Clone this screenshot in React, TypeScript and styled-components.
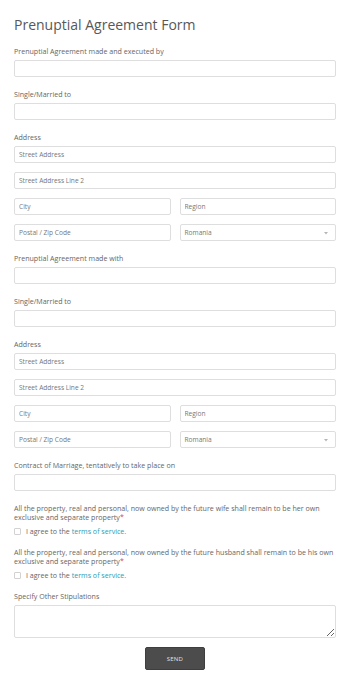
import React from "react";
import styled, { createGlobalStyle } from "styled-components";

const Global = createGlobalStyle`
  html, body { margin: 0; padding: 0; background: #fff; }
  body { font-family: "Open Sans", "Liberation Sans", sans-serif; color: #555; }
  * { box-sizing: border-box; }
`;

const Page = styled.form`
  display: flex;
  flex-direction: column;
  padding: 16px 14px 14px 14px;
  width: 350px;
`;

const Title = styled.h1`
  margin: 0 0 14px 0;
  font-size: 14px;
  line-height: 17px;
  font-weight: 400;
  color: #585858;
`;

const Field = styled.div<{ $gap?: number }>`
  display: flex;
  flex-direction: column;
  margin-bottom: ${(p) => (p.$gap ?? 13)}px;
`;

const Label = styled.label`
  font-size: 7.1px;
  line-height: 9px;
  color: #666;
  margin-bottom: 4px;
`;

const Req = styled.span`
  color: #e0403a;
`;

const Input = styled.input`
  height: 17px;
  width: 100%;
  border: 1px solid #dedede;
  border-radius: 2px;
  padding: 0 4px;
  font-family: inherit;
  font-size: 6.6px;
  color: #777;
  background: #fff;
  outline: none;
  &::placeholder { color: #777; }
`;

const Stack = styled.div`
  display: flex;
  flex-direction: column;
  gap: 9px;
`;

const Row = styled.div`
  display: grid;
  grid-template-columns: 1fr 1fr;
  gap: 9px;
`;

const SelectBox = styled.div`
  position: relative;
  height: 17px;
  border: 1px solid #dedede;
  border-radius: 2px;
  padding: 0 4px;
  display: flex;
  align-items: center;
  font-size: 6.6px;
  color: #777;
`;

const Arrow = styled.svg`
  position: absolute;
  right: 7px;
  top: 7px;
`;

const CheckRow = styled.div`
  display: flex;
  align-items: center;
  gap: 5px;
  height: 10px;
  font-size: 7.1px;
  color: #666;
`;

const Box = styled.span`
  width: 7px;
  height: 7px;
  border: 1px solid #d2d2d2;
  border-radius: 1px;
  background: #fff;
`;

const Link = styled.a`
  color: #2a9cb5;
  text-decoration: none;
`;

const TextArea = styled.textarea`
  height: 33px;
  width: 100%;
  border: 1px solid #dedede;
  border-radius: 2px;
  font-family: inherit;
  font-size: 6.6px;
  outline: none;
  resize: vertical;
  display: block;
`;

const Actions = styled.div`
  display: flex;
  justify-content: center;
  padding-top: 9px;
`;

const SendButton = styled.button`
  width: 60px;
  height: 23px;
  background: #4c4c4c;
  border: 1px solid #3e3e3e;
  border-radius: 2px;
  color: #e2e2e2;
  font-family: inherit;
  font-size: 6px;
  letter-spacing: 0.2px;
  padding: 0;
`;

const AddressBlock: React.FC = () => (
  <Field>
    <Label>Address</Label>
    <Stack>
      <Input placeholder="Street Address" />
      <Input placeholder="Street Address Line 2" />
      <Row>
        <Input placeholder="City" />
        <Input placeholder="Region" />
      </Row>
      <Row>
        <Input placeholder="Postal / Zip Code" />
        <SelectBox>
          Romania
          <Arrow width="4" height="3" viewBox="0 0 4 3">
            <path d="M0 0 L4 0 L2 2.5 Z" fill="#b5b5b5" />
          </Arrow>
        </SelectBox>
      </Row>
    </Stack>
  </Field>
);

const TextField: React.FC<{ label: string }> = ({ label }) => (
  <Field>
    <Label>{label}</Label>
    <Input />
  </Field>
);

const Agree: React.FC<{ text: string }> = ({ text }) => (
  <Field $gap={12}>
    <Label>
      {text}
      <Req>*</Req>
    </Label>
    <CheckRow>
      <Box />
      <span>
        I agree to the <Link href="#">terms of service.</Link>
      </span>
    </CheckRow>
  </Field>
);

export default function App() {
  return (
    <>
      <Global />
      <Page onSubmit={(e) => e.preventDefault()}>
        <Title>Prenuptial Agreement Form</Title>
        <TextField label="Prenuptial Agreement made and executed by" />
        <TextField label="Single/Married to" />
        <AddressBlock />
        <TextField label="Prenuptial Agreement made with" />
        <TextField label="Single/Married to" />
        <AddressBlock />
        <TextField label="Contract of Marriage, tentatively to take place on" />
        <Agree text="All the property, real and personal, now owned by the future wife shall remain to be her own exclusive and separate property" />
        <Agree text="All the property, real and personal, now owned by the future husband shall remain to be his own exclusive and separate property" />
        <Field $gap={0}>
          <Label>Specify Other Stipulations</Label>
          <TextArea />
        </Field>
        <Actions>
          <SendButton type="submit">SEND</SendButton>
        </Actions>
      </Page>
    </>
  );
}
